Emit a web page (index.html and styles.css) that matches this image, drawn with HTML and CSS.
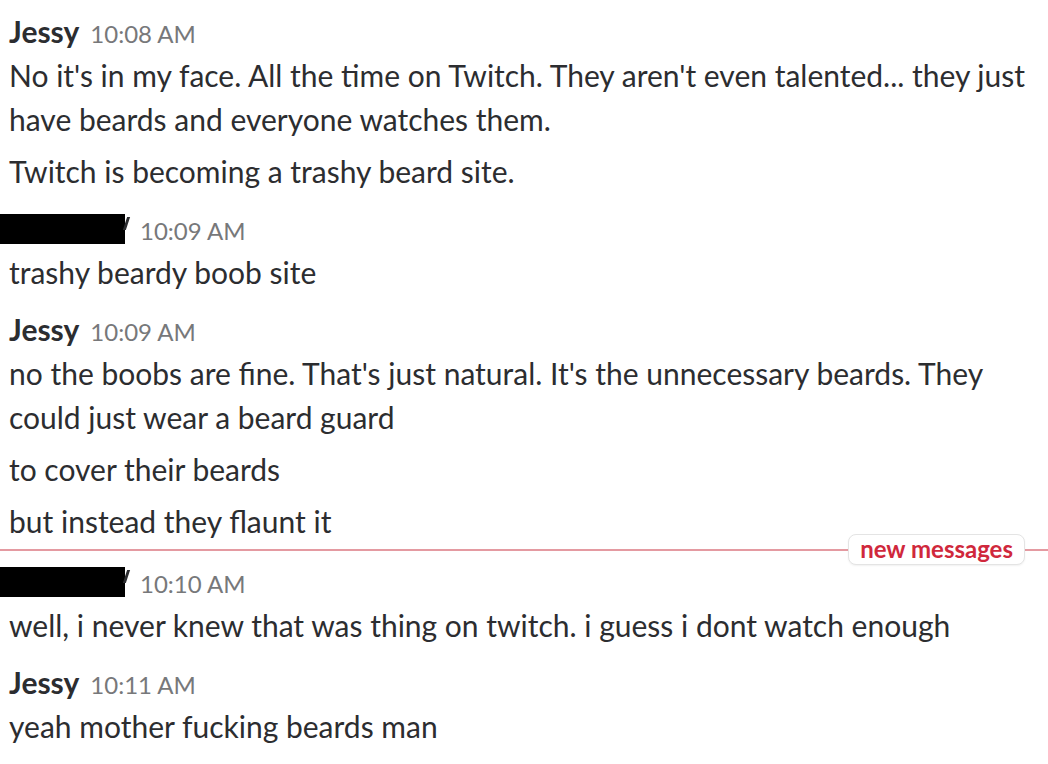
FILE: index.html
```html
<!DOCTYPE html>
<html>
<head>
<meta charset="utf-8">
<link rel="stylesheet" href="styles.css">
</head>
<body>
<div class="feed">
  <div class="group">
    <div class="header"><span class="name">Jessy</span><span class="time">10:08 AM</span></div>
    <p class="text">No it's in my face. All the time on Twitch. They aren't even talented... they just have beards and everyone watches them.</p>
    <p class="text">Twitch is becoming a trashy beard site.</p>
  </div>
  <div class="group">
    <div class="header"><span class="redacted"></span><span class="time">10:09 AM</span></div>
    <p class="text">trashy beardy boob site</p>
  </div>
  <div class="group">
    <div class="header"><span class="name">Jessy</span><span class="time">10:09 AM</span></div>
    <p class="text">no the boobs are fine. That's just natural. It's the unnecessary beards. They could just wear a beard guard</p>
    <p class="text">to cover their beards</p>
    <p class="text">but instead they flaunt it</p>
  </div>
  <div class="divider"><span class="pill">new messages</span></div>
  <div class="group">
    <div class="header"><span class="redacted"></span><span class="time">10:10 AM</span></div>
    <p class="text">well, i never knew that was thing on twitch. i guess i dont watch enough</p>
  </div>
  <div class="group">
    <div class="header"><span class="name">Jessy</span><span class="time">10:11 AM</span></div>
    <p class="text">yeah mother fucking beards man</p>
  </div>
</div>
</body>
</html>
```
FILE: styles.css
```css
html, body {
  margin: 0;
  padding: 0;
  background: #ffffff;
}
body {
  width: 1048px;
  height: 764px;
  overflow: hidden;
  font-family: Lato, "Noto Sans", sans-serif;
  color: #2c2d30;
}
.feed {
  padding: 9px 8px 0 9px;
}
.group {
  margin-bottom: 13px;
}
.header {
  font-size: 30px;
  line-height: 44px;
  height: 44px;
  white-space: nowrap;
}
.name {
  font-weight: 700;
  color: #2c2d30;
}
.time {
  font-size: 24px;
  line-height: 1;
  color: #77787a;
  margin-left: 11px;
}
.redacted {
  position: relative;
  display: inline-block;
  width: 125px;
  height: 30px;
  margin-left: -9px;
  margin-right: 4px;
  background: #000000;
  vertical-align: -4px;
}
.redacted::after {
  content: "";
  position: absolute;
  right: -3px;
  top: 3px;
  width: 3px;
  height: 13px;
  background: #2c2d30;
  transform: skewX(-18deg);
}
.text {
  margin: 0 0 8px 0;
  font-size: 30px;
  line-height: 44px;
}
.text:last-child {
  margin-bottom: 0;
}
.divider {
  position: relative;
  margin: -7px -8px 8px -9px;
  height: 2px;
  background: #e49aa1;
}
.pill {
  position: absolute;
  right: 23px;
  top: -15px;
  height: 29px;
  line-height: 28px;
  padding: 0 11px;
  background: #ffffff;
  border: 1px solid #e4e4e4;
  border-radius: 8px;
  box-shadow: 0 1px 2px rgba(0,0,0,0.06);
  color: #d0283c;
  font-size: 24px;
  font-weight: 700;
  white-space: nowrap;
}
```
